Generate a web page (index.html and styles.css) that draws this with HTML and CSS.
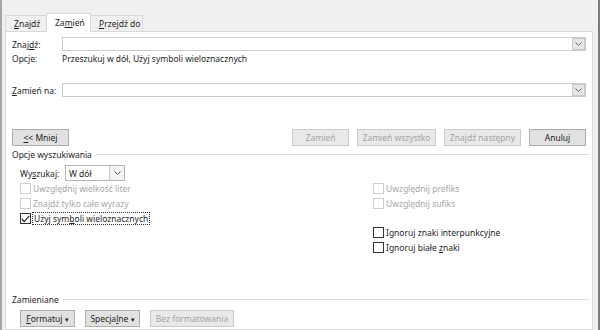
FILE: index.html
```html
<!DOCTYPE html>
<html lang="pl">
<head>
    <meta charset="UTF-8">
    <meta name="viewport" content="width=device-width, initial-scale=1.0">
    <title>Znajdowanie i zamienianie</title>
    <link rel="stylesheet" href="styles.css">
</head>
<body>
<div class="window">

    <div class="title"><span>Znajdowanie i zamienianie</span></div>

    <!-- karty -->
    <div class="tabs">
        <div class="tab"><u>Z</u>najdź</div>
        <div class="tab active">Za<u>m</u>ień</div>
        <div class="tab"><u>P</u>rzejdź do</div>
    </div>

    <div class="panel">

        <div class="field-row find">
            <span class="field-label">Znaj<u>d</u>ź:</span>
            <div class="combo"><span class="combo-btn"><svg width="7" height="4" viewBox="0 0 7 4"><path d="M0.5 0.5 L3.5 3.5 L6.5 0.5" fill="none" stroke="#6a6a6a" stroke-width="1"/></svg></span></div>
        </div>

        <div class="field-row opts">
            <span class="field-label">Opcje:</span>
            <span>Przeszukuj w dół, Użyj symboli wieloznacznych</span>
        </div>

        <div class="field-row replace">
            <span class="field-label"><u>Z</u>amień na:</span>
            <div class="combo"><span class="combo-btn"><svg width="7" height="4" viewBox="0 0 7 4"><path d="M0.5 0.5 L3.5 3.5 L6.5 0.5" fill="none" stroke="#6a6a6a" stroke-width="1"/></svg></span></div>
        </div>

        <div class="button-row">
            <button class="btn less"><u>&lt;</u>&lt; Mniej</button>
            <div class="spacer"></div>
            <button class="btn disabled w57">Zamień</button>
            <button class="btn disabled w79">Zamień wszystko</button>
            <button class="btn disabled w77">Znajdź następny</button>
            <button class="btn w57">Anuluj</button>
        </div>

        <div class="group-title">Opcje wyszukiwania</div>

        <div class="search-options">
            <div class="col-left">
                <div class="dir-row">
                    <span class="dir-label">Wy<u>s</u>zukaj:</span>
                    <div class="select">
                        <span class="select-text">W dół</span>
                        <span class="select-btn"><svg width="7" height="4" viewBox="0 0 7 4"><path d="M0.5 0.5 L3.5 3.5 L6.5 0.5" fill="none" stroke="#555" stroke-width="1"/></svg></span>
                    </div>
                </div>
                <div class="check disabled"><span class="box"></span><span>Uwzględnij wielkość liter</span></div>
                <div class="check disabled"><span class="box"></span><span>Znajdź tylko całe wyrazy</span></div>
                <div class="check"><span class="box"><svg width="9" height="8" viewBox="0 0 9 8"><path d="M0.8 4 L3.3 6.6 L8.3 0.8" fill="none" stroke="#222" stroke-width="1.1"/></svg></span><span class="focus">Użyj sym<u>b</u>oli wieloznacznych</span></div>
            </div>
            <div class="col-right">
                <div class="check disabled"><span class="box"></span><span>Uwzględnij prefiks</span></div>
                <div class="check disabled"><span class="box"></span><span>Uwzględnij sufiks</span></div>
                <div class="check-gap"></div>
                <div class="check"><span class="box"></span><span>Ignoruj znaki interpunkcyjne</span></div>
                <div class="check"><span class="box"></span><span>Ignoruj białe <u>z</u>naki</span></div>
            </div>
        </div>

        <div class="group-title replaced">Zamieniane</div>

        <div class="format-row">
            <button class="btn w55"><u>F</u>ormatuj <span class="caret">▾</span></button>
            <button class="btn w55">Specja<u>l</u>ne <span class="caret">▾</span></button>
            <button class="btn disabled w84">Bez formatowania</button>
        </div>

    </div>
</div>
</body>
</html>
```

FILE: styles.css
```css
body {
    margin: 0;
    background: #f0f0f0;
    font-family: "Noto Sans", "Liberation Sans", sans-serif;
    font-size: 8.5px;
    color: #1e1e1e;
}

u {
    text-decoration-thickness: 1px;
    text-underline-offset: 1px;
}

.window {
    width: 600px;
    height: 330px;
    box-sizing: border-box;
    border-left: 2px solid #a5a5a5;
    border-right: 2px solid #7c7c7c;
    padding: 0 5px 0 3px;
    overflow: hidden;
}

.title {
    height: 13px;
    overflow: hidden;
    font-size: 9px;
}

.title span {
    display: block;
    margin-top: -12px;
    padding-left: 2px;
    white-space: nowrap;
}

/* karty */
.tabs {
    display: flex;
    align-items: flex-end;
    height: 18px;
}

.tab {
    height: 16px;
    box-sizing: border-box;
    line-height: 15px;
    padding: 0 8px;
    border: 1px solid #d9d9d9;
    border-bottom: none;
    margin-right: -1px;
    background: #f0f0f0;
    white-space: nowrap;
}

.tab:first-child {
    width: 42px;
}

.tab.active {
    height: 19px;
    width: 45px;
    line-height: 17px;
    background: #fff;
    margin-bottom: -1px;
    position: relative;
    z-index: 1;
}

.tab:last-child {
    width: 53px;
}

.panel {
    height: 299px;
    box-sizing: border-box;
    background: #fff;
    border: 1px solid #d9d9d9;
    padding: 0 6px;
    display: flex;
    flex-direction: column;
}

.field-row {
    display: flex;
    align-items: center;
    height: 14px;
}

.field-row.find {
    margin-top: 5px;
}

.field-row.opts {
    height: 15px;
}

.field-row.replace {
    margin-top: 17px;
}

.field-label {
    width: 50px;
    flex: none;
}

.combo {
    flex: 1;
    height: 14px;
    box-sizing: border-box;
    border: 1px solid #cdcdcd;
    display: flex;
    justify-content: flex-end;
    align-items: stretch;
    padding: 1px;
}

.combo-btn {
    width: 11px;
    background: #e6e6e6;
    border: 1px solid #c9c9c9;
    display: flex;
    align-items: center;
    justify-content: center;
    margin: -1px;
}

/* przyciski */
.button-row {
    display: flex;
    gap: 8px;
    margin-top: 32px;
}

.spacer {
    flex: 1;
}

.btn {
    height: 17px;
    box-sizing: border-box;
    padding: 0;
    font: inherit;
    color: #1e1e1e;
    background: #e1e1e1;
    border: 1px solid #adadad;
    text-align: center;
    flex: none;
    white-space: nowrap;
}

.btn.disabled {
    color: #a3a3a3;
    background: #e9e9e9;
    border-color: #cacaca;
}

.less, .w57 { width: 57px; }
.w79 { width: 79px; }
.w77 { width: 77px; }
.w55 { width: 55px; }
.w84 { width: 84px; }

.group-title {
    display: flex;
    align-items: center;
    height: 15px;
    margin-top: 1px;
}

.group-title::after {
    content: "";
    flex: 1;
    height: 1px;
    background: #dedede;
    margin: 0 -3px 0 4px;
}

.group-title.replaced {
    margin-top: 37px;
}

.search-options {
    display: flex;
}

.col-left {
    width: 361px;
    box-sizing: border-box;
    padding-left: 8px;
}

.col-right {
    padding-top: 19px;
}

.dir-row {
    display: flex;
    align-items: center;
    margin-top: 3px;
    height: 16px;
}

.dir-label {
    width: 45px;
}

.select {
    width: 60px;
    height: 16px;
    box-sizing: border-box;
    border: 1px solid #b4b4b4;
    display: flex;
    align-items: center;
}

.select-text {
    flex: 1;
    padding-left: 3px;
}

.select-btn {
    width: 14px;
    height: 14px;
    border-left: 1px solid #c8c8c8;
    background: #f3f3f3;
    display: flex;
    align-items: center;
    justify-content: center;
}

/* pola wyboru */
.check {
    display: flex;
    align-items: center;
    height: 15px;
    white-space: nowrap;
}

.check-gap {
    height: 14px;
}

.box {
    width: 11px;
    height: 11px;
    box-sizing: border-box;
    border: 1px solid #333;
    margin-right: 2px;
    display: flex;
    align-items: center;
    justify-content: center;
    flex: none;
}

.check.disabled {
    color: #a6a6a6;
}

.check.disabled .box {
    border-color: #cfcfcf;
}

.focus {
    outline: 1px dotted #333;
    padding: 0 1px;
}

.format-row {
    display: flex;
    gap: 10px;
    padding-left: 8px;
    margin-top: 3px;
}

.caret {
    font-size: 7px;
}
```
